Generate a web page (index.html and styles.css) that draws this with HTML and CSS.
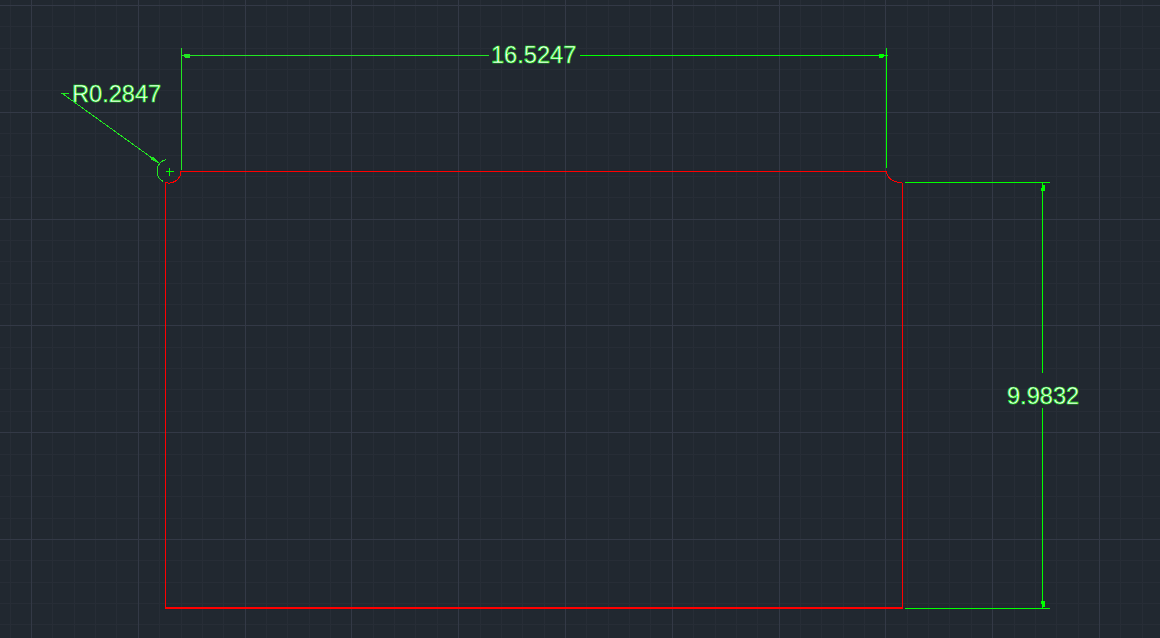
FILE: index.html
```html
<!DOCTYPE html>
<html lang="en">
<head>
<meta charset="utf-8">
<title>Drawing</title>
<link rel="stylesheet" href="styles.css">
</head>
<body>
<svg class="canvas" width="1160" height="638" viewBox="0 0 1160 638" shape-rendering="crispEdges">
<g id="minor" class="grid-minor"></g>
<g id="major" class="grid-major"></g>
<g class="red">
<path d="M165.5 608V183"/>
<path class="heavy" d="M165 608H903"/>
<path d="M902.5 608V183"/>
<path d="M181 171.5H886"/>
<path d="M165.5 182.5A12 12 0 0 0 181 171.5"/>
<path d="M886.5 171.5A15 11 0 0 0 902 182.5"/>
</g>
<g class="green-soft">
<path d="M181.5 48V170"/>
<path d="M181 55.5H489"/>
<path d="M61 93.5H69"/>
<path d="M63 94L159 163"/>
<path d="M166 159.500A12 12 0 0 0 163 181.500"/>
</g>
<g class="green">
<path d="M165.500 171.500H173.500M169.500 167.500V175.500"/>
<path d="M580 55.5H888"/>
<path d="M886.5 48V168"/>
<path d="M905 182.5H1050"/>
<path d="M905 608.5H1050"/>
<path d="M1042.5 183V373M1042.5 408V608"/>
</g>
<g class="arrows-soft">
<path d="M182 55L185 54H190V58H185Z"/>
<path d="M160 164L150.500 159L153 156.500Z"/>
</g>
<g class="arrows">
<path d="M885 55L882 54H879V58H882Z"/>
<path d="M1044 183L1045 187V191H1041V188L1043 187Z"/>
<path d="M1044 609L1045 605V601H1041V604L1043 605Z"/>
</g>
<g class="dim">
<text x="491" y="63">16.5247</text>
<text x="72" y="101.500">R0.2847</text>
<text x="1007" y="404">9.9832</text>
</g>
</svg>
<script src="grid.js"></script>
</body>
</html>
```
FILE: styles.css
```css
html, body {
  margin: 0;
  padding: 0;
  background: #212830;
  overflow: hidden;
}
.canvas {
  display: block;
}
.grid-minor line {
  stroke: #272d36;
  stroke-width: 1;
}
.grid-major line {
  stroke: #333946;
  stroke-width: 1;
}
.red path {
  fill: none;
  stroke: #ff0000;
  stroke-width: 1;
}
.red .heavy {
  stroke-width: 2;
}
.green path {
  fill: none;
  stroke: #00ff00;
  stroke-width: 1;
}
.green-soft path {
  fill: none;
  stroke: #22e622;
  stroke-width: 1;
}
.arrows path {
  fill: #00ff00;
}
.arrows-soft path {
  fill: #22e622;
}
.dim text {
  font-family: "Liberation Sans", Arial, sans-serif;
  font-size: 23.6px;
  fill: #ffffff;
  stroke: #12e812;
  stroke-width: 0.7px;
  shape-rendering: geometricPrecision;
}
```
FILE: grid.js
```js
const NS = "http://www.w3.org/2000/svg";
const step = 21.36;
const x0 = 31, y0 = 5;
function addLine(group, x1, y1, x2, y2) {
  const l = document.createElementNS(NS, "line");
  l.setAttribute("x1", x1); l.setAttribute("y1", y1);
  l.setAttribute("x2", x2); l.setAttribute("y2", y2);
  group.appendChild(l);
}
const minor = document.getElementById("minor");
const major = document.getElementById("major");
for (let i = -1; i < 56; i++) {
  const x = Math.round(x0 + i * step) + 0.5;
  addLine(i % 5 === 0 ? major : minor, x, 0, x, 638);
}
for (let i = 0; i < 31; i++) {
  const y = Math.round(y0 + i * step) + 0.5;
  addLine(i % 5 === 0 ? major : minor, 0, y, 1160, y);
}
```
